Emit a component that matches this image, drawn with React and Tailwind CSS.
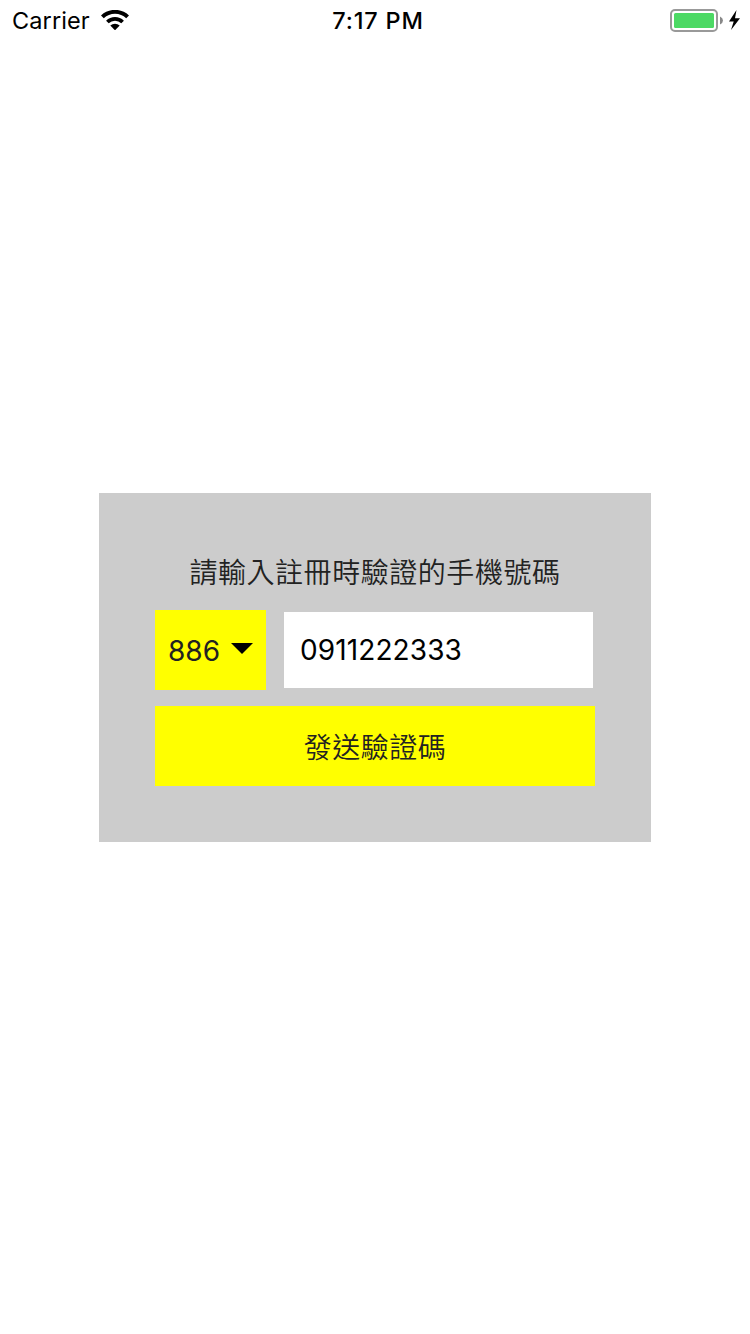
export default function App() {
  return (
    <div className="flex h-[1334px] w-[750px] flex-col bg-white font-['Inter',sans-serif] text-black">
      <header className="grid h-10 grid-cols-3 items-center pl-3 pr-[9px]">
        <div className="flex items-center gap-[11px]">
          <span className="pt-0.5 text-[23.5px] tracking-[0.1px] leading-[38px]">Carrier</span>
          <svg className="h-5 w-7" viewBox="0 0 28 20">
            <path d="M14 20.3 L9.3 15.6 A7 7 0 0 1 18.7 15.6Z" />
            <path d="M6.4 12 A11 11 0 0 1 21.6 12" fill="none" stroke="#000" strokeWidth="3.8" />
            <path d="M1.4 6.9 A18.2 18.2 0 0 1 26.6 6.9" fill="none" stroke="#000" strokeWidth="4" />
          </svg>
        </div>
        <span className="pl-[3px] pt-0.5 text-center text-[23.5px] font-[550] tracking-[0.8px] leading-[38px]">7:17 PM</span>
        <div className="flex items-center justify-end">
          <svg className="h-6 w-[72px]" viewBox="0 0 72 24">
            <rect x="2" y="2" width="46" height="21" rx="4" fill="none" stroke="#999" strokeWidth="2" />
            <rect x="5" y="5" width="40" height="15" rx="1.5" fill="#4cd964" />
            <path d="M51 8.5 Q54 10 54 12.5 T51 16.5Z" fill="#888" />
            <path d="M67.5 2 L60 13.5 H64.7 L62 22 L71 10.3 H66Z" />
          </svg>
        </div>
      </header>
      <main className="flex flex-1 flex-col items-center pt-[453px]">
        <section className="flex h-[349px] w-[552px] flex-col bg-[#ccc] px-14 pt-[60px] text-[#222]">
          <h1 className="h-[57px] text-center font-['Noto_Sans_CJK_TC',sans-serif] text-[28px] font-[350] tracking-[0.55px] leading-9">請輸入註冊時驗證的手機號碼</h1>
          <div className="flex h-20 items-center gap-[18px]">
            <button className="flex h-20 w-[111px] items-center gap-[11px] bg-[#ff0] pl-[13px] text-[28px]">
              <span className="pt-px">886</span>
              <svg className="mb-[3px] h-[11px] w-[22px]" viewBox="0 0 22 11"><path d="M0 0H22L11 11Z" fill="#000" /></svg>
            </button>
            <input className="h-[76px] w-[309px] bg-white px-4 pb-px text-[28px] tracking-[0.1px] text-black outline-none" defaultValue="0911222333" />
          </div>
          <button className="mt-4 h-20 w-full bg-[#ff0] font-['Noto_Sans_CJK_TC',sans-serif] text-[28px] font-[350] tracking-[0.5px]">發送驗證碼</button>
        </section>
      </main>
    </div>
  );
}
